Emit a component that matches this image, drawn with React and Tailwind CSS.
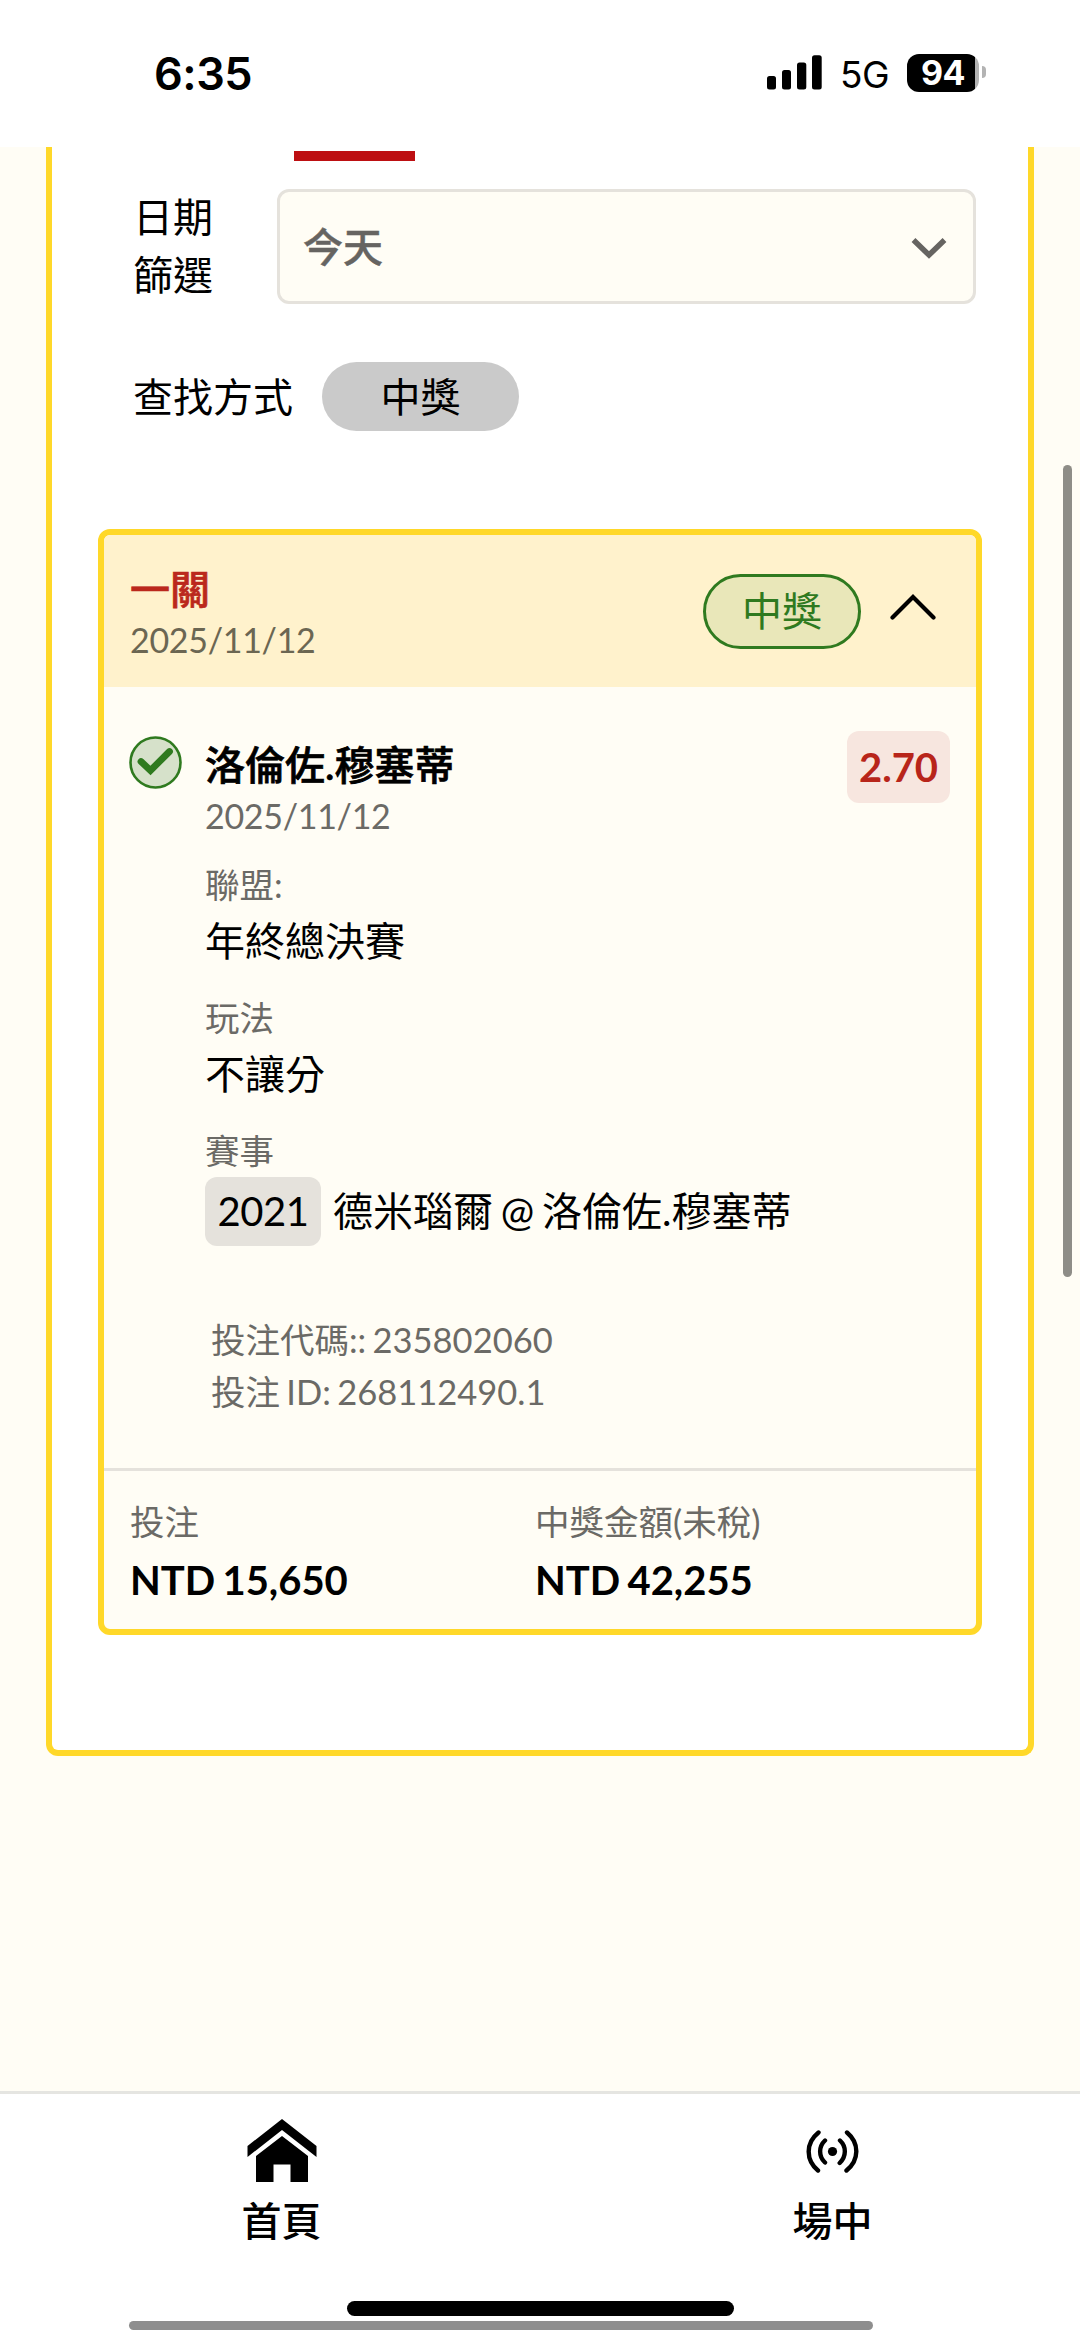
const details = [
  { label: '聯盟:', value: '年終總決賽', className: 'mt-5' },
  { label: '玩法', value: '不讓分', className: 'mt-[21px]' },
];

const totals = [
  { label: '投注', value: 'NTD 15,650', className: 'w-[405px]' },
  { label: '中獎金額(未稅)', value: 'NTD 42,255', className: 'flex-1' },
];

function StatusBar() {
  return (
    <header className="flex h-[147px] shrink-0 items-start justify-between bg-white pl-[154px] pr-[94px] font-['Inter','Liberation_Sans',sans-serif] text-black">
      <span className="mt-[46px] text-[45px] leading-[56px] font-semibold tracking-[-0.5px]">6:35</span>
      <div className="mt-[53px] flex h-[38px] items-center">
        <svg className="h-[38px] w-[55px]" viewBox="0 0 55 38">
          <rect x="0" y="23" width="9" height="13.5" rx="2.5" />
          <rect x="15" y="17" width="9" height="19.5" rx="2.5" />
          <rect x="30" y="9.5" width="9.3" height="27" rx="2.5" />
          <rect x="45" y="2.3" width="9.7" height="34.2" rx="2.5" />
        </svg>
        <span className="ml-[18px] mt-[5px] w-[67px] text-[37px] leading-[38px] tracking-[-0.5px]">5G</span>
        <div className="mt-px flex h-[38px] w-[72px] items-center justify-center rounded-[12px] bg-[linear-gradient(90deg,#000_94%,#b3b3b3_94%)]">
          <span className="text-[34px] leading-[38px] font-bold tracking-[-0.5px] text-white">94</span>
        </div>
        <div className="ml-[3px] h-[12px] w-[4px] rounded-r-full bg-[#b3b3b3]" />
      </div>
    </header>
  );
}

function Filters() {
  return (
    <>
      <div className="mt-[28px] flex h-[115px] items-center pl-[81px]">
        <div className="w-[144px] leading-[57.6px]">
          <p>日期</p>
          <p>篩選</p>
        </div>
        <div className="flex h-full w-[699px] items-center justify-between rounded-[12px] border-[3px] border-[#e5e2dc] bg-[#fffdf5] pl-[23px] pr-[25px] font-medium text-[#666461]">
          <span className="[-webkit-text-stroke:0.5px]">今天</span>
          <svg className="mt-[3px] h-[22px] w-[38px]" viewBox="0 0 38 22" fill="none" stroke="currentColor" strokeWidth="5.5">
            <path d="M3.5 3 19 18 34.5 3" />
          </svg>
        </div>
      </div>

      <div className="mt-[58px] flex h-[69px] items-center pl-[81px]">
        <span className="w-[189px]">查找方式</span>
        <button className="h-[69px] w-[197px] rounded-full bg-[#cacaca] text-center">中獎</button>
      </div>
    </>
  );
}

function BetCard() {
  return (
    <section className="mx-[46px] mt-[98px] rounded-[12px] border-[6px] border-[#ffd829] bg-[#fffdf5]">
      <div className="flex h-[152px] items-center rounded-t-[6px] bg-[#fff2cc] pl-[26px] pr-[40px]">
        <div className="mt-[5px] flex-1">
          <h2 className="leading-[52px] font-medium text-[#bb281c] [-webkit-text-stroke:0.7px]">一關</h2>
          <p className="text-[34px] leading-[49px] tracking-[-0.3px] text-[#6b6652]">2025/11/12</p>
        </div>
        <span className="flex h-[75px] w-[158px] items-center justify-center rounded-full border-[3px] border-[#2f7a1f] bg-[#e9e7b9] text-[#2f7a1f]">
          中獎
        </span>
        <svg className="mb-2 ml-[29px] h-[26px] w-[46px]" viewBox="0 0 46 26" fill="none" stroke="#000" strokeWidth="4.2" strokeLinecap="round">
          <path d="M2.5 23.5 23 3 43.5 23.5" />
        </svg>
      </div>

      <div className="flex pl-[25px] pr-[26px] pt-[49px]">
        <svg className="h-[53px] w-[53px] shrink-0" viewBox="0 0 53 53" fill="none" stroke="#2f7a1f">
          <circle cx="26.5" cy="26.5" r="25" fill="#d6e1ca" strokeWidth="2.6" />
          <path d="M12 25.500 21.500 34.500 40.500 15.500" strokeWidth="6.8" strokeLinecap="round" />
        </svg>

        <div className="ml-[23px] mt-[3px] flex-1">
          <h3 className="leading-[52px] font-medium [-webkit-text-stroke:0.7px]">洛倫佐.穆塞蒂</h3>
          <p className="text-[34px] leading-[49px] tracking-[-0.3px] text-[#6b6a66]">2025/11/12</p>

          {details.map((row) => (
            <div key={row.label} className={row.className}>
              <p className="text-[34.5px] leading-[50px] text-[#6b6a66]">{row.label}</p>
              <p className="leading-[62px]">{row.value}</p>
            </div>
          ))}

          <p className="mt-[21px] text-[34.5px] leading-[50px] text-[#6b6a66]">賽事</p>
          <div className="flex h-[70px] items-center gap-[12px]">
            <span className="flex h-[69px] w-[116px] items-center justify-center rounded-[12px] bg-[#e5e2dc] tracking-[-0.5px]">2021</span>
            <span className="[word-spacing:-2.5px]">德米瑙爾 @ 洛倫佐.穆塞蒂</span>
          </div>

          <div className="mt-[68px] pl-[6px] text-[34.5px] leading-[52px] text-[#6b6a66] [word-spacing:-2.5px]">
            <p>投注代碼:: 235802060</p>
            <p>投注 ID: 268112490.1</p>
          </div>
        </div>

        <span className="-mt-[5px] -ml-[103px] flex h-[72px] w-[103px] items-center justify-center rounded-[12px] bg-[#f7e6df] font-bold text-[#b8251a]">
          2.70
        </span>
      </div>

      <div className="mt-[50px] flex h-[161px] border-t-[3px] border-[#e5e2dc] pl-[26px] pt-[26px]">
        {totals.map((item) => (
          <div key={item.label} className={item.className}>
            <p className="text-[34.5px] leading-[50px] text-[#6b6a66]">{item.label}</p>
            <p className="leading-[66px] font-bold [word-spacing:-2.5px]">{item.value}</p>
          </div>
        ))}
      </div>
    </section>
  );
}

function BottomNav() {
  return (
    <nav className="flex h-[248px] shrink-0 overflow-hidden border-t-[3px] border-[#e5e5e1] bg-white pl-[6px] font-medium">
      <a className="flex w-[551px] shrink-0 flex-col items-center">
        <svg className="mt-[25px] h-[63px] w-[70px]" viewBox="0 0 70 63">
          <path d="M35 0 69.5 27v11L35 11 .5 38V27Z" />
          <path d="M35 17 61 37v26H43.500V45.500H26.500V63H9V37Z" />
        </svg>
        <span className="mt-[13px] leading-[52px]">首頁</span>
      </a>
      <a className="flex w-[551px] shrink-0 flex-col items-center">
        <svg className="mt-[36px] h-[43px] w-[54px]" viewBox="0 0 54 43" fill="none" stroke="#000" strokeWidth="4.4" strokeLinecap="round">
          <circle cx="26.500" cy="21.500" r="4.600" fill="#000" stroke="none" />
          <path d="M12.500 2.500C-.5 13 -.5 30 12 40.500M19 10.500c-6.500 6-6.500 16 0 22" />
          <path d="M41 2.500c12.500 10.500 12.500 27.500-.5 38M34 10.500c6.500 6 6.500 16-.3 22.500" />
        </svg>
        <span className="mt-[22px] leading-[52px]">場中</span>
      </a>
    </nav>
  );
}

export default function App() {
  return (
    <div className="relative flex h-[2339px] w-[1080px] flex-col overflow-hidden bg-[#fffdf5] font-['Lato','Noto_Sans_CJK_TC',sans-serif] text-[40px] leading-[52px] text-black">
      <StatusBar />
      <main className="flex-1 px-[46px]">
        <div className="h-[1609px] rounded-b-[12px] border-x-[6px] border-b-[6px] border-[#ffd829] bg-white pt-1">
          <div className="ml-[242px] h-[10px] w-[121px] bg-[#bd0f12]" />
          <Filters />
          <BetCard />
        </div>
      </main>
      <BottomNav />

      {/* scroll bars and home indicator */}
      <div className="absolute right-[8px] top-[465px] h-[812px] w-[9px] rounded-full bg-[#8e8d87]" />
      <div className="absolute left-[347px] top-[2301px] h-[15px] w-[387px] rounded-full bg-black" />
      <div className="absolute left-[129px] top-[2321px] h-[9px] w-[744px] rounded-full bg-[#8e8e8e]" />
    </div>
  );
}
